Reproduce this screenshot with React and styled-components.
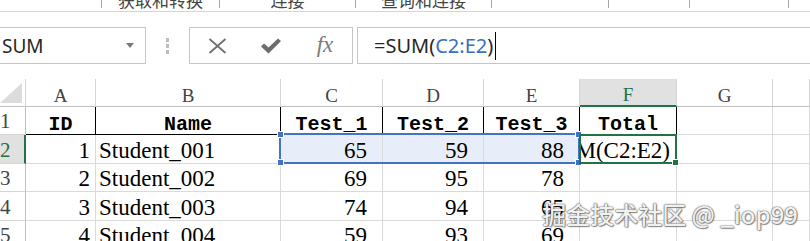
import styled, { createGlobalStyle } from "styled-components";

const GlobalStyle = createGlobalStyle`
  html, body {
    margin: 0;
    padding: 0;
    background: #fff;
  }
  body {
    width: 810px;
    height: 241px;
    overflow: hidden;
  }
`;

const Screen = styled.div`
  position: relative;
  width: 810px;
  height: 241px;
  overflow: hidden;
  background: #fff;
`;

/* ribbon strip, cut at the top */
const Ribbon = styled.div`
  display: flex;
  align-items: flex-start;
  height: 11px;
  border-bottom: 1px solid #d5d5d5;
`;

const Group = styled.div`
  flex: ${(p) => (p.w ? `0 0 ${p.w}px` : "1")};
  height: 8px;
  box-sizing: border-box;
  display: flex;
  justify-content: center;
  align-items: flex-end;
  border-right: 1px solid ${(p) => (p.w ? "#a8a8a8" : "transparent")};
  font-family: "Noto Sans CJK SC", sans-serif;
  font-size: 17px;
  line-height: 17px;
  color: #444;
  white-space: nowrap;
`;

/* formula bar */
const FormulaBar = styled.div`
  display: flex;
  height: 37px;
  margin-top: 15px;
`;

const NameBox = styled.div`
  box-sizing: border-box;
  flex: 0 0 147px;
  margin-left: -1px;
  display: flex;
  align-items: center;
  justify-content: space-between;
  padding: 0 11px 0 2px;
  border: 1px solid #c6c6c6;
  font-family: "Noto Sans", "Open Sans", sans-serif;
  font-size: 19px;
  color: #262626;
`;

const Dots = styled.div`
  flex: 0 0 43px;
  display: flex;
  flex-direction: column;
  align-items: center;
  justify-content: center;
  gap: 2px;
`;

const Dot = styled.span`
  width: 3px;
  height: 4px;
  background: #bdbdbd;
`;

const ButtonBox = styled.div`
  box-sizing: border-box;
  flex: 0 0 164px;
  display: flex;
  border: 1px solid #c6c6c6;
`;

const BarButton = styled.div`
  flex: 1;
  display: flex;
  align-items: center;
  justify-content: center;
  color: #6e6e6e;
`;

const Fx = styled.span`
  font-family: "Liberation Serif", serif;
  font-style: italic;
  font-size: 23px;
  color: #7a7a7a;
  margin-top: -2px;
`;

const FormulaInput = styled.div`
  box-sizing: border-box;
  flex: 1;
  margin: 0 -1px 0 4px;
  display: flex;
  align-items: center;
  padding-left: 16px;
  border: 1px solid #c6c6c6;
  font-family: "Noto Sans", "Open Sans", sans-serif;
  font-size: 20px;
  color: #262626;
  white-space: nowrap;
`;

const Ref = styled.span`
  color: #3b6fc2;
`;

const Caret = styled.span`
  display: inline-block;
  width: 1px;
  height: 28px;
  margin-left: 2px;
  background: #000;
`;

/* sheet */
const Sheet = styled.div`
  display: grid;
  grid-template-columns: 26px 70px 185px 102px 101px 96px 97px 96px 1fr;
  grid-template-rows: 28px 28px 29px 28px 29px 28px;
  margin-top: 15px;
`;

const Corner = styled.div`
  grid-row: 1;
  grid-column: 1;
  box-sizing: border-box;
  display: flex;
  align-items: flex-end;
  padding-bottom: 3px;
  border-right: 1px solid #d4d4d4;
  border-bottom: 1px solid #bfbfbf;
`;

const ColHead = styled.div`
  grid-row: 1;
  grid-column: ${(p) => p.c};
  box-sizing: border-box;
  display: flex;
  justify-content: center;
  align-items: flex-end;
  padding-bottom: 1px;
  background: ${(p) => (p.active ? "#e1e1e1" : "#fff")};
  border-right: 1px solid #d4d4d4;
  border-bottom: ${(p) => (p.active ? "2px solid #217346" : "1px solid #bfbfbf")};
  font-family: "Liberation Serif", serif;
  font-size: 19px;
  line-height: 19px;
  color: ${(p) => (p.active ? "#217346" : "#444")};
`;

const RowHead = styled.div`
  grid-row: ${(p) => p.r};
  grid-column: 1;
  box-sizing: border-box;
  display: flex;
  align-items: flex-end;
  background: ${(p) => (p.active ? "#e1e1e1" : "#fff")};
  border-right: ${(p) => (p.active ? "2px solid #217346" : "1px solid #bfbfbf")};
  border-bottom: 1px solid #d4d4d4;
  font-family: "Liberation Serif", serif;
  font-size: 21px;
  line-height: 25px;
  color: ${(p) => (p.active ? "#217346" : "#444")};
`;

const Cell = styled.div`
  grid-row: ${(p) => p.r};
  grid-column: ${(p) => p.c};
  box-sizing: border-box;
  min-width: 0;
  display: flex;
  align-items: flex-end;
  justify-content: ${(p) => (p.right ? "flex-end" : "flex-start")};
  padding: 0 ${(p) => p.pr ?? 3}px 0 3px;
  background: ${(p) => (p.sel ? "#e8eef9" : "#fff")};
  border-right: 1px solid ${(p) => (p.dark ? "#000" : "#dadada")};
  border-bottom: 1px solid ${(p) => (p.dark ? "#000" : "#dadada")};
  font-family: "Liberation Serif", serif;
  font-size: 23px;
  line-height: 25px;
  color: #000;
  white-space: nowrap;
  overflow: hidden;
`;

const HeadCell = styled(Cell)`
  justify-content: center;
  padding: 0;
  font-family: "Liberation Mono", monospace;
  font-weight: 700;
  font-size: 20px;
  line-height: 19px;
`;

const RangeBox = styled.div`
  grid-row: 3;
  grid-column: 4 / 7;
  position: relative;
  margin: -2px 0 0 -2px;
  border: 2px solid #4472c4;
  pointer-events: none;
`;

const EditBox = styled.div`
  grid-row: 3;
  grid-column: 7;
  position: relative;
  margin: -1px 0 0 -1px;
  border: 2px solid #217346;
  pointer-events: none;
`;

const Handle = styled.span`
  position: absolute;
  width: 5px;
  height: 5px;
  background: ${(p) => p.color};
  border: 1px solid #fff;
  ${(p) => (p.top ? "top: -4px;" : "bottom: -4px;")}
  ${(p) => (p.left ? "left: -4px;" : "right: -4px;")}
`;

const Watermark = styled.div`
  position: absolute;
  right: 12px;
  bottom: 12px;
  font-family: "Noto Sans CJK SC", sans-serif;
  font-size: 24px;
  font-weight: 500;
  line-height: 30px;
  color: #f0f0f0;
  text-shadow: 0 0 1px #555, 0 0 2px rgba(0, 0, 0, 0.6), 1px 1px 1px rgba(0, 0, 0, 0.35);
  white-space: nowrap;
`;

const groups = [
  { w: 102, label: "" },
  { w: 118, label: "获取和转换" },
  { w: 136, label: "连接" },
  { w: 136, label: "查询和连接" },
  { w: 117, label: "" },
  { w: 81, label: "" },
  { w: 99, label: "" },
  { w: 0, label: "" },
];

const letters = ["A", "B", "C", "D", "E", "F", "G", ""];
const heads = ["ID", "Name", "Test_1", "Test_2", "Test_3", "Total"];

const rows = [
  [1, "Student_001", 65, 59, 88],
  [2, "Student_002", 69, 95, 78],
  [3, "Student_003", 74, 94, 65],
  [4, "Student_004", 59, 93, 69],
];

export default function App() {
  return (
    <Screen>
      <GlobalStyle />
      <Ribbon>
        {groups.map((g, i) => (
          <Group key={i} w={g.w}>
            {g.label}
          </Group>
        ))}
      </Ribbon>

      <FormulaBar>
        <NameBox>
          SUM
          <svg width="8" height="5" viewBox="0 0 8 5">
            <polygon points="0,0 8,0 4,5" fill="#7a7a7a" />
          </svg>
        </NameBox>
        <Dots>
          <Dot />
          <Dot />
          <Dot />
        </Dots>
        <ButtonBox>
          <BarButton>
            <svg width="19" height="16" viewBox="0 0 19 16">
              <path d="M1.5 1 L17.5 15 M17.5 1 L1.5 15" stroke="#707070" strokeWidth="1.8" fill="none" />
            </svg>
          </BarButton>
          <BarButton>
            <svg width="20" height="16" viewBox="0 0 20 16">
              <polygon points="0,8.5 3,5.5 7.5,9.5 17,0.5 20,3 7.5,15.5" fill="#6c6c6c" />
            </svg>
          </BarButton>
          <BarButton>
            <Fx>fx</Fx>
          </BarButton>
        </ButtonBox>
        <FormulaInput>
          =SUM(<Ref>C2:E2</Ref>)<Caret />
        </FormulaInput>
      </FormulaBar>

      <Sheet>
        <Corner>
          <svg width="22" height="20" viewBox="0 0 22 20">
            <polygon points="22,0 22,20 0,20" fill="#dcdcdc" />
          </svg>
        </Corner>
        {letters.map((l, i) => (
          <ColHead key={i} c={i + 2} active={l === "F"}>
            {l}
          </ColHead>
        ))}

        {[1, 2, 3, 4, 5].map((n) => (
          <RowHead key={n} r={n + 1} active={n === 2}>
            {n}
          </RowHead>
        ))}

        {heads.map((h, i) => (
          <HeadCell key={h} r={2} c={i + 2} dark>
            {h}
          </HeadCell>
        ))}
        <Cell r={2} c={8} />
        <Cell r={2} c={9} />

        {rows.map((row, ri) => {
          const r = ri + 3;
          const sel = ri === 0;
          return [
            <Cell key={`a${r}`} r={r} c={2} right pr={5}>
              {row[0]}
            </Cell>,
            <Cell key={`b${r}`} r={r} c={3}>
              {row[1]}
            </Cell>,
            ...[2, 3, 4].map((k) => (
              <Cell key={`n${r}${k}`} r={r} c={k + 2} right pr={15} sel={sel}>
                {row[k]}
              </Cell>
            )),
            <Cell key={`f${r}`} r={r} c={7} right pr={6}>
              {sel ? "=SUM(C2:E2)" : ""}
            </Cell>,
            <Cell key={`g${r}`} r={r} c={8} />,
            <Cell key={`h${r}`} r={r} c={9} />,
          ];
        })}

        <RangeBox>
          <Handle color="#4472c4" top left />
          <Handle color="#4472c4" left />
          <Handle color="#4472c4" top />
          <Handle color="#4472c4" />
        </RangeBox>
        <EditBox>
          <Handle color="#217346" />
        </EditBox>
      </Sheet>

      <Watermark>掘金技术社区 @ _iop99</Watermark>
    </Screen>
  );
}
